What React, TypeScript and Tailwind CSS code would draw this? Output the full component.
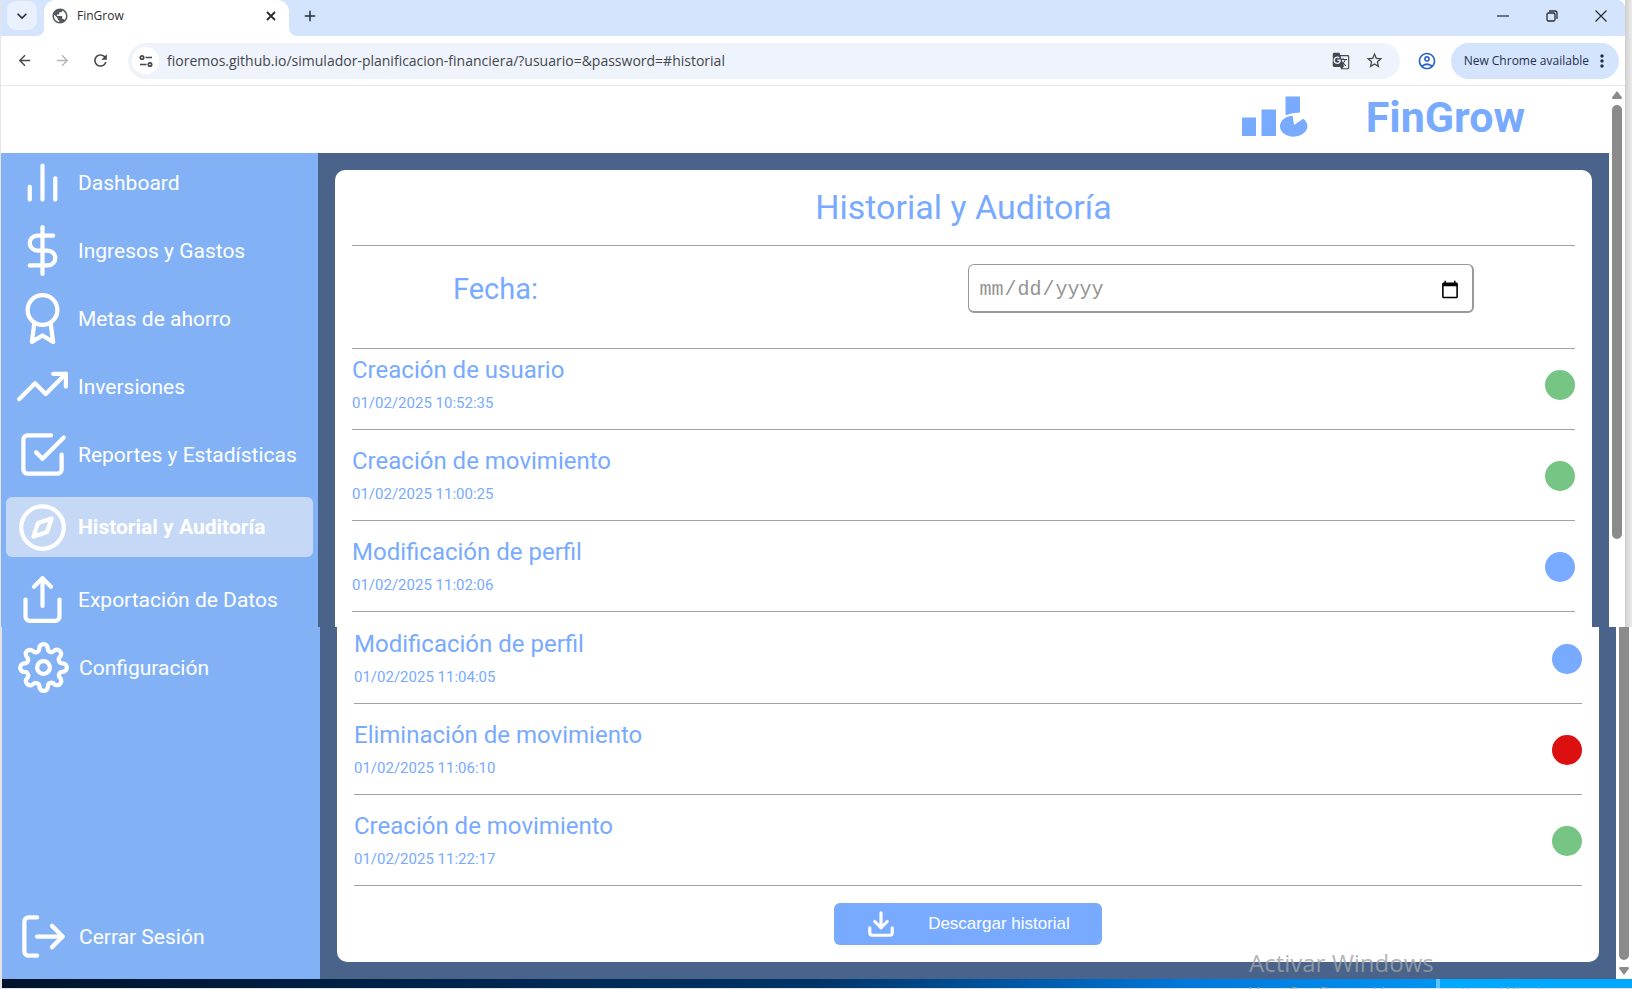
import type { ReactNode } from "react";
import type { IconType } from "react-icons";
import {
  FiAward,
  FiBarChart2,
  FiCheckSquare,
  FiCompass,
  FiDollarSign,
  FiDownload,
  FiLogOut,
  FiSettings,
  FiShare,
  FiTrendingUp,
} from "react-icons/fi";
import {
  MdArrowBack,
  MdArrowForward,
  MdGTranslate,
  MdKeyboardArrowDown,
  MdMoreVert,
  MdOutlineAccountCircle,
  MdPublic,
  MdRefresh,
  MdStarOutline,
  MdAdd,
} from "react-icons/md";

const DOT = {
  create: "bg-[#76c584]",
  update: "bg-[#78aaff]",
  remove: "bg-[#dc1010]",
};

type Entry = { title: string; date: string; kind: keyof typeof DOT };

const firstEntries: Entry[] = [
  { title: "Creación de usuario", date: "01/02/2025 10:52:35", kind: "create" },
  { title: "Creación de movimiento", date: "01/02/2025 11:00:25", kind: "create" },
  { title: "Modificación de perfil", date: "01/02/2025 11:02:06", kind: "update" },
];

const lastEntries: Entry[] = [
  { title: "Modificación de perfil", date: "01/02/2025 11:04:05", kind: "update" },
  { title: "Eliminación de movimiento", date: "01/02/2025 11:06:10", kind: "remove" },
  { title: "Creación de movimiento", date: "01/02/2025 11:22:17", kind: "create" },
];

const navItems: { label: string; icon: IconType; active?: boolean }[] = [
  { label: "Dashboard", icon: FiBarChart2 },
  { label: "Ingresos y Gastos", icon: FiDollarSign },
  { label: "Metas de ahorro", icon: FiAward },
  { label: "Inversiones", icon: FiTrendingUp },
  { label: "Reportes y Estadísticas", icon: FiCheckSquare },
  { label: "Historial y Auditoría", icon: FiCompass, active: true },
  { label: "Exportación de Datos", icon: FiShare },
];

function NavLink({ label, icon: Icon, active }: { label: string; icon: IconType; active?: boolean }) {
  return (
    <a
      href="#historial"
      className={
        active
          ? "flex h-[60px] items-center gap-[10px] rounded-md bg-[#c5d8f6] pl-[11px] font-bold text-white"
          : "flex h-[51px] items-center gap-[10px] pl-[11px] text-white"
      }
    >
      <Icon className="size-[51px] shrink-0" />
      <span className="text-[21px] leading-7 whitespace-nowrap">{label}</span>
    </a>
  );
}

function EntryRow({ entry, className }: { entry: Entry; className: string }) {
  return (
    <li className={`flex items-center justify-between border-b border-[#a3a3a3] pb-4 ${className}`}>
      <div className="flex flex-col gap-[9px] text-[#78aaff]">
        <h2 className="text-2xl leading-7">{entry.title}</h2>
        <time className="text-[15px] leading-5">{entry.date}</time>
      </div>
      <span className={`size-[30px] rounded-full ${DOT[entry.kind]}`} />
    </li>
  );
}

function IconButton({ label, className, children }: { label: string; className: string; children: ReactNode }) {
  return (
    <button type="button" aria-label={label} className={`flex items-center justify-center ${className}`}>
      {children}
    </button>
  );
}

function TabStrip() {
  return (
    <div className="flex h-9 items-stretch rounded-tr-lg bg-[#d5e4fd] pl-[6px] text-[#2a2c30]">
      <IconButton label="Buscar pestañas" className="mt-[1px] h-[29px] w-[30px] rounded-[9px] bg-[#e9f1fe]">
        <MdKeyboardArrowDown className="size-5" />
      </IconButton>
      <div className="flex w-[7px] items-end">
        <svg viewBox="0 0 8 8" className="size-[7px]" fill="#fff">
          <path d="M8 0v8H0a8 8 0 0 0 8-8z" />
        </svg>
      </div>
      <div className="flex w-[245px] items-center rounded-t-xl bg-white pr-2 pb-1 pl-[7px]">
        <MdPublic className="size-[18px] text-[#55585d]" />
        <span className="flex-1 pl-2 text-[12px]">FinGrow</span>
        <IconButton label="Cerrar pestaña" className="size-5">
          <svg viewBox="0 0 10 10" className="size-[10px]" stroke="currentColor" strokeWidth="1.8">
            <path d="M1 1l8 8M9 1L1 9" />
          </svg>
        </IconButton>
      </div>
      <div className="flex w-2 items-end">
        <svg viewBox="0 0 8 8" className="size-2" fill="#fff">
          <path d="M0 0v8h8a8 8 0 0 1-8-8z" />
        </svg>
      </div>
      <IconButton label="Nueva pestaña" className="w-[26px] pb-[5px]">
        <MdAdd className="size-[18px]" />
      </IconButton>
      <div className="ml-auto flex items-center gap-[18px] pr-[9px] pb-[5px]">
        <IconButton label="Minimizar" className="size-[31px]">
          <svg viewBox="0 0 12 12" className="size-3" stroke="currentColor" strokeWidth="1.2">
            <path d="M0 6h12" />
          </svg>
        </IconButton>
        <IconButton label="Restaurar" className="size-[31px]">
          <svg viewBox="0 0 12 12" className="size-3" fill="none" stroke="currentColor" strokeWidth="1.3">
            <rect x="1" y="3" width="8" height="8" rx="1.5" />
            <path d="M3 1h6a2 2 0 0 1 2 2v6" />
          </svg>
        </IconButton>
        <IconButton label="Cerrar" className="size-[31px]">
          <svg viewBox="0 0 12 12" className="size-3" stroke="currentColor" strokeWidth="1.2">
            <path d="M.5.5l11 11M11.5.5l-11 11" />
          </svg>
        </IconButton>
      </div>
    </div>
  );
}

function AddressBar() {
  return (
    <div className="flex h-[50px] items-center border-b border-[#e3eaea] bg-white pr-[6px] pl-[13px] text-[#44474c]">
      <IconButton label="Atrás" className="size-5">
        <MdArrowBack className="size-[17px]" />
      </IconButton>
      <IconButton label="Adelante" className="ml-[18px] size-5 text-[#b4b6b9]">
        <MdArrowForward className="size-[17px]" />
      </IconButton>
      <IconButton label="Recargar" className="ml-[18px] size-5">
        <MdRefresh className="size-[19px]" />
      </IconButton>
      <div className="ml-[18px] flex h-9 flex-1 items-center rounded-full bg-[#eff3fb] pr-[15px] pl-[4px]">
        <span className="flex size-[27px] items-center justify-center rounded-full bg-white">
          <svg viewBox="0 0 14 14" className="size-[14px]" fill="none" stroke="currentColor" strokeWidth="1.7">
            <circle cx="3" cy="3.5" r="1.7" />
            <path d="M6.5 3.5H13M1 10.5h6.500" />
            <circle cx="11" cy="10.500" r="1.700" />
          </svg>
        </span>
        <input
          type="text"
          aria-label="Dirección"
          defaultValue="fioremos.github.io/simulador-planificacion-financiera/?usuario=&password=#historial"
          className="ml-[8px] min-w-0 flex-1 bg-transparent text-[14px] outline-none"
        />
        <IconButton label="Traducir" className="size-5">
          <MdGTranslate className="size-[18px]" />
        </IconButton>
        <IconButton label="Marcador" className="ml-[14px] size-5">
          <MdStarOutline className="size-[19px]" />
        </IconButton>
      </div>
      <IconButton label="Perfil" className="ml-[17px] size-5 text-[#2763cb]">
        <MdOutlineAccountCircle className="size-5" />
      </IconButton>
      <button
        type="button"
        className="ml-[14px] flex h-9 items-center rounded-full bg-[#d5e4fd] pr-[7px] pl-[13px] text-[12px] whitespace-nowrap text-[#1f2f4d]"
      >
        New Chrome available
        <MdMoreVert className="ml-[3px] size-5" />
      </button>
    </div>
  );
}

function AppHeader() {
  return (
    <header className="flex h-[67px] items-center justify-end bg-white pr-[84px] pb-[6px] text-[#78aaff]">
      <svg viewBox="0 0 68 42" className="mr-[57px] h-[42px] w-[68px]" fill="currentColor">
        <path d="M1 21.500h14V40H1zM20.500 13.500H35V40H20.500z" />
        <path d="M44.500.5H59v16q-8 .3-14.500 2.700z" />
        <path d="M51.700 19.700L53 29l9.300-6.300A13.700 10.500 0 1 1 51.700 19.700z" />
      </svg>
      <span className="text-[43px] leading-[50px] font-bold">FinGrow</span>
    </header>
  );
}

export default function App() {
  return (
    <div className="relative min-h-screen overflow-hidden bg-[#e4e4e4] font-['Roboto',sans-serif]">
      <section className="flex">
        <div className="ml-[1px] min-w-0 flex-1 bg-white">
          <div className="bg-white font-['Open_Sans',sans-serif]">
            <TabStrip />
            <AddressBar />
          </div>
          <div className="flex">
            <div className="min-w-0 flex-1">
              <AppHeader />
              <div className="flex bg-[#49638a]">
                <nav className="flex w-[317px] shrink-0 flex-col gap-[17px] bg-[#82b2f5] px-[5px] pt-[4px]">
                  {navItems.map((item) => (
                    <NavLink key={item.label} {...item} />
                  ))}
                </nav>
                <main className="min-w-0 flex-1 px-[17px] pt-[17px]">
                  <div className="rounded-t-[10px] bg-white px-[17px] pb-[15px]">
                    <h1 className="border-b border-[#a3a3a3] pt-[17px] pb-[18px] text-center text-[34px] leading-10 text-[#78aaff]">
                      Historial y Auditoría
                    </h1>
                    <div className="grid grid-cols-2 items-center gap-2 border-b border-[#a3a3a3] px-[101px] pt-[18px] pb-[35px]">
                      <label htmlFor="fecha" className="text-[29px] leading-9 text-[#78aaff]">
                        Fecha:
                      </label>
                      <input
                        id="fecha"
                        type="date"
                        className="h-[49px] w-full rounded-md border border-r-2 border-b-2 border-[#999999] bg-white px-[10px] pt-[3px] font-['Liberation_Mono',monospace] text-[20px] text-[#959595]"
                      />
                    </div>
                    <ul>
                      {firstEntries.map((entry, i) => (
                        <EntryRow key={entry.date} entry={entry} className={i === 0 ? "pt-[7px]" : "pt-[17px]"} />
                      ))}
                    </ul>
                  </div>
                </main>
              </div>
            </div>
            <div className="flex w-4 flex-col items-center bg-white pt-[5px]">
              <svg viewBox="0 0 10 8" className="h-2 w-[10px]" fill="#8b8b8b">
                <path d="M5 0l5 6.500q0 1.500-1 1.500H1Q0 8 0 6.500z" />
              </svg>
              <div className="mt-[6px] h-[434px] w-[10px] rounded-full bg-[#8b8b8b]" />
            </div>
          </div>
        </div>
        <div className="w-[7px] bg-linear-to-r from-[#cfcfcf] to-[#ececec]" />
      </section>

      <section className="ml-[2px] flex bg-[#49638a]">
        <nav className="flex w-[318px] shrink-0 flex-col justify-between bg-[#82b2f5] px-[5px] pt-[15px] pb-[17px]">
          <NavLink label="Configuración" icon={FiSettings} />
          <NavLink label="Cerrar Sesión" icon={FiLogOut} />
        </nav>
        <div className="min-w-0 flex-1 px-[17px] pb-[17px]">
          <div className="rounded-b-[10px] bg-white px-[17px] pb-[17px]">
            <ul>
              {lastEntries.map((entry, i) => (
                <EntryRow key={entry.date} entry={entry} className={i === 0 ? "pt-[3px]" : "pt-[17px]"} />
              ))}
            </ul>
            <div className="flex justify-center pt-[17px]">
              <button
                type="button"
                className="flex h-[42px] items-center gap-8 rounded-md bg-[#78aaff] px-8 font-['Liberation_Sans',sans-serif] text-[17px] text-white"
              >
                <FiDownload className="size-[30px]" strokeWidth={2.5} />
                Descargar historial
              </button>
            </div>
          </div>
        </div>
        <div className="flex w-4 flex-col items-center bg-white pb-1">
          <div className="w-[10px] flex-1 rounded-b-full bg-[#8b8b8b]" />
          <svg viewBox="0 0 10 8" className="mt-[7px] h-2 w-[10px]" fill="#8b8b8b">
            <path d="M5 8L0 1.500Q0 0 1 0h8q1 0 1 1.500z" />
          </svg>
        </div>
      </section>

      <div className="ml-[2px] flex h-[9px]">
        <div className="w-1/2 bg-linear-to-r from-[#00132c] to-[#003468]" />
        <div className="w-[38%] bg-linear-to-r from-[#003468] via-[#0078dc] via-60% to-[#0094f2]" />
        <div className="w-1 bg-[#5cc4ff]" />
        <div className="flex-1 bg-[#00a8ff]" />
      </div>

      <div className="absolute right-0 bottom-0 h-[42px] w-[383px] overflow-hidden font-['Open_Sans',sans-serif] whitespace-nowrap text-[#a0a3a8]/80">
        <p className="text-[24px] leading-8">Activar Windows</p>
        <p className="pt-[2px] text-[17px] leading-6">Ve a Configuración para activar Windows.</p>
      </div>
    </div>
  );
}
